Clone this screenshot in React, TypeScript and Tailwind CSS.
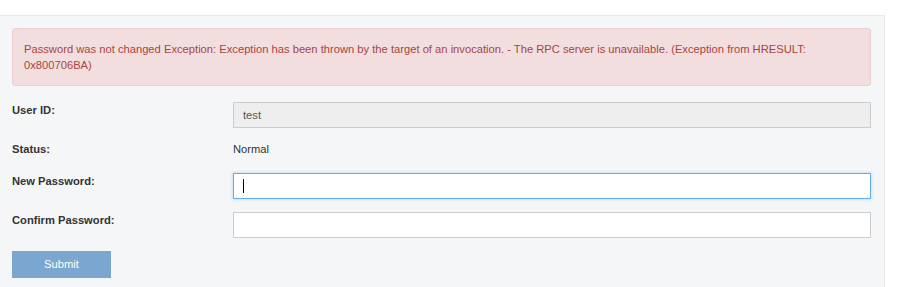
export default function App() {
  return (
    <div className="h-[287px] w-[900px] overflow-hidden bg-white font-['Liberation_Sans',Arial,sans-serif]">
      <div className="mt-[15px] h-[272px] w-[885px] border-t border-r border-[#e6e8ea] bg-[#f5f6f8] px-3 pt-3">
        <div className="w-[859px] rounded-[3px] border border-[#ebccd1] bg-[#f2dede] px-[11px] pt-[12px] pb-[12px] text-[11.2px] leading-4 text-[#a94442]">
          Password was not changed Exception: Exception has been thrown by the target of an invocation. - The RPC server is unavailable. (Exception from HRESULT: 0x800706BA)
        </div>

        <div className="mt-[16px] flex w-[859px] text-[11.2px] leading-4 text-[#333]">
          <label className="w-[221px] font-bold">User ID:</label>
          <div className="flex h-[26px] flex-1 items-center border border-[#ccc] bg-[#eee] px-[9px] text-[#555]">test</div>
        </div>

        <div className="mt-[13px] flex w-[859px] text-[11.2px] leading-4 text-[#333]">
          <label className="w-[221px] font-bold">Status:</label>
          <div>Normal</div>
        </div>

        <div className="mt-[16px] flex w-[859px] text-[11.2px] leading-4 text-[#333]">
          <label className="w-[221px] font-bold">New Password:</label>
          <div className="flex h-[26px] flex-1 items-center border border-[#66afe9] bg-white px-[9px] shadow-[0_0_3px_rgba(102,175,233,0.5)]">
            <span className="h-[14px] w-px bg-black" />
          </div>
        </div>

        <div className="mt-[13px] flex w-[859px] text-[11.2px] leading-4 text-[#333]">
          <label className="w-[221px] font-bold">Confirm Password:</label>
          <div className="h-[26px] flex-1 border border-[#ccc] bg-white" />
        </div>

        <button className="mt-[13px] h-[27px] w-[99px] bg-[#7aa6d0] text-[11.2px] text-white">Submit</button>
      </div>
    </div>
  );
}
